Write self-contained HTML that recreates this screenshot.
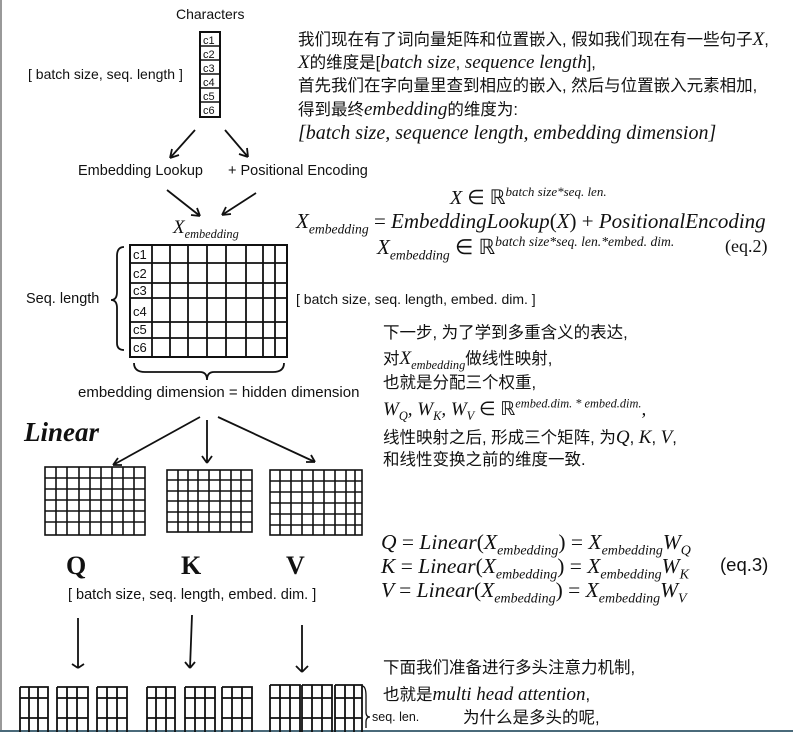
<!DOCTYPE html>
<html><head><meta charset="utf-8"><style>
body{margin:0;width:793px;height:732px;background:#fff;position:relative;overflow:hidden;font-family:"Liberation Sans","Noto Sans CJK SC",sans-serif;color:#111}
.t{position:absolute;white-space:nowrap;line-height:1}
.s{font-size:14.5px}
.c{font-size:16.5px;font-family:"Liberation Sans","Noto Sans CJK SC",sans-serif}
.m{font-family:"Liberation Serif",serif;font-style:italic}
.u{font-family:"Liberation Serif",serif;font-style:normal}
sub,sup{font-size:65%;line-height:0}
sub{vertical-align:-0.4em}
sup{vertical-align:0.6em}
svg{position:absolute;left:0;top:0}
</style></head><body>
<svg width="793" height="732" viewBox="0 0 793 732" fill="none" stroke="#111" stroke-width="2">
<line x1="1" y1="0" x2="1" y2="732" stroke="#999" stroke-width="2"/>
<line x1="0" y1="731" x2="793" y2="731" stroke="#4a6a7a" stroke-width="2"/>
<rect x="200" y="32" width="20" height="85"/>
<g stroke-width="1.5"><line x1="200" y1="46" x2="220" y2="46"/><line x1="200" y1="60" x2="220" y2="60"/><line x1="200" y1="74" x2="220" y2="74"/><line x1="200" y1="88" x2="220" y2="88"/><line x1="200" y1="102" x2="220" y2="102"/></g>
<g fill="#111" stroke="none" font-family="Liberation Sans" font-size="11"><text x="203" y="44">c1</text><text x="203" y="58">c2</text><text x="203" y="72">c3</text><text x="203" y="86">c4</text><text x="203" y="100">c5</text><text x="203" y="114">c6</text></g>
<g stroke-width="1.8">
<path d="M195 130 L170 158 M170 158 l2 -9 M170 158 l9 -3"/>
<path d="M225 130 L248 157 M248 157 l-9 -3 M248 157 l-1 -9"/>
<path d="M167 190 L200 216 M200 216 l-9 -1 M200 216 l-3 -8"/>
<path d="M256 193 L222 215 M222 215 l4 -8 M222 215 l9 -1"/>
<path d="M200 417 L113 465 M113 465 l5 -7 M113 465 l9 0"/>
<path d="M207 420 L207 463 M207 463 l-5 -7 M207 463 l5 -7"/>
<path d="M218 417 L315 462 M315 462 l-9 0 M315 462 l-4 -7"/>
<path d="M78 618 L78 668 M78 668 l-6 -4 M78 668 l6 -4"/>
<path d="M192 615 L190 668 M190 668 l-5 -6 M190 668 l5 -6"/>
<path d="M302 625 L302 672 M302 672 l-6 -6 M302 672 l6 -6"/>
</g>
<rect x="130" y="245" width="157" height="112"/>
<g stroke-width="1.8">
<line x1="152" y1="245" x2="152" y2="357"/><line x1="170" y1="245" x2="170" y2="357"/><line x1="188" y1="245" x2="188" y2="357"/><line x1="207" y1="245" x2="207" y2="357"/><line x1="226" y1="245" x2="226" y2="357"/><line x1="246" y1="245" x2="246" y2="357"/><line x1="263" y1="245" x2="263" y2="357"/><line x1="275" y1="245" x2="275" y2="357"/>
<line x1="130" y1="263" x2="287" y2="263"/><line x1="130" y1="283" x2="287" y2="283"/><line x1="130" y1="298" x2="287" y2="298"/><line x1="130" y1="322" x2="287" y2="322"/><line x1="130" y1="338" x2="287" y2="338"/>
</g>
<g fill="#111" stroke="none" font-family="Liberation Sans" font-size="13"><text x="133" y="259">c1</text><text x="133" y="278">c2</text><text x="133" y="295">c3</text><text x="133" y="316">c4</text><text x="133" y="334">c5</text><text x="133" y="352">c6</text></g>
<path d="M124 247 Q117 247 117 256 L117 292 Q117 300 111 300 Q117 300 117 308 L117 343 Q117 350 124 350" stroke-width="1.8"/>
<path d="M134 363 Q134 372 145 372 L200 372 Q207 372 207 380 Q207 372 214 372 L273 372 Q284 372 284 363" stroke-width="1.8"/>
<g stroke-width="1.6">
<rect x="45" y="467" width="100" height="68"/>
<path d="M56 467V535M67 467V535M79 467V535M90 467V535M101 467V535M112 467V535M123 467V535M134 467V535M45 478H145M45 489H145M45 500H145M45 511H145M45 522H145"/>
<rect x="167" y="470" width="85" height="62"/>
<path d="M178 470V532M188 470V532M198 470V532M209 470V532M220 470V532M231 470V532M241 470V532M167 480H252M167 491H252M167 501H252M167 512H252M167 522H252"/>
<rect x="270" y="470" width="92" height="65"/>
<path d="M280 470V535M291 470V535M302 470V535M313 470V535M324 470V535M335 470V535M346 470V535M355 470V535M270 481H362M270 492H362M270 503H362M270 514H362M270 525H362"/>
</g>
<g stroke-width="1.8">
<path d="M20 687H48V732M20 687V732M20 698H48M20 718H48M29 687V732M38 687V732"/>
<path d="M57 687H88V732M57 687V732M57 698H88M57 718H88M67 687V732M77 687V732"/>
<path d="M97 687H127V732M97 687V732M97 698H127M97 718H127M107 687V732M117 687V732"/>
<path d="M147 687H175V732M147 687V732M147 698H175M147 718H175M156 687V732M166 687V732"/>
<path d="M185 687H215V732M185 687V732M185 698H215M185 718H215M195 687V732M205 687V732"/>
<path d="M222 687H252V732M222 687V732M222 698H252M222 718H252M232 687V732M242 687V732"/>
<path d="M270 685H300V732M270 685V732M270 698H300M270 718H300M280 685V732M290 685V732"/>
<path d="M302 685H332V732M302 685V732M302 698H332M302 718H332M312 685V732M322 685V732"/>
<path d="M335 685H362V732M335 685V732M335 698H362M335 718H362M345 685V732M354 685V732"/>
<path d="M362 686 Q366 686 366 696 L366 712 Q366 717 370 717 Q366 717 366 722 L366 728" stroke-width="1.3"/>
</g>
<g fill="#111" stroke="none" font-family="Liberation Serif" font-weight="bold" font-size="26"><text x="66" y="574">Q</text><text x="181" y="574">K</text><text x="286" y="574">V</text></g>
<text x="24" y="441" fill="#111" stroke="none" font-family="Liberation Serif" font-style="italic" font-weight="bold" font-size="27">Linear</text>
</svg>
<div class="t s" style="left:176px;top:7px;font-size:14px">Characters</div>
<div class="t s" style="left:28px;top:67px;font-size:14px">[ batch size, seq. length ]</div>
<div class="t s" style="left:78px;top:164px">Embedding Lookup</div>
<div class="t s" style="left:228px;top:164px">+ Positional Encoding</div>
<div class="t m" style="left:173px;top:218px;font-size:19px">X<sub>embedding</sub></div>
<div class="t s" style="left:26px;top:292px">Seq. length</div>
<div class="t s" style="left:296px;top:292px;font-size:14px">[ batch size, seq. length, embed. dim. ]</div>
<div class="t s" style="left:78px;top:385px;font-size:15px">embedding dimension = hidden dimension</div>
<div class="t s" style="left:68px;top:588px;font-size:14.5px">[ batch size, seq. length, embed. dim. ]</div>
<div class="t s" style="left:372px;top:711px;font-size:12.5px">seq. len.</div>

<div class="t c" style="left:298px;top:30px">我们现在有了词向量矩阵和位置嵌入, 假如我们现在有一些句子<span class="m" style="font-size:19px">X</span>,</div>
<div class="t c" style="left:298px;top:53px"><span class="m" style="font-size:19px">X</span>的维度是[<span class="m" style="font-size:19px">batch size</span>, <span class="m" style="font-size:19px">sequence length</span>],</div>
<div class="t c" style="left:298px;top:78px">首先我们在字向量里查到相应的嵌入, 然后与位置嵌入元素相加,</div>
<div class="t c" style="left:298px;top:100px">得到最终<span class="m" style="font-size:19px">embedding</span>的维度为:</div>
<div class="t m" style="left:298px;top:123px;font-size:20px">[batch size, sequence length, embedding dimension]</div>

<div class="t m" style="left:450px;top:188px;font-size:20px">X <span class="u">∈ ℝ</span><sup>batch size*seq. len.</sup></div>
<div class="t m" style="left:296px;top:211px;font-size:21px">X<sub>embedding</sub> <span class="u">=</span> EmbeddingLookup<span class="u">(</span>X<span class="u">) +</span> PositionalEncoding</div>
<div class="t m" style="left:377px;top:237px;font-size:21px">X<sub>embedding</sub> <span class="u">∈ ℝ</span><sup>batch size*seq. len.*embed. dim.</sup></div>
<div class="t u" style="left:725px;top:237px;font-size:18px">(eq.2)</div>

<div class="t c" style="left:383px;top:325px">下一步, 为了学到多重含义的表达,</div>
<div class="t c" style="left:383px;top:349px">对<span class="m" style="font-size:19px">X<sub>embedding</sub></span>做线性映射,</div>
<div class="t c" style="left:383px;top:375px">也就是分配三个权重,</div>
<div class="t m" style="left:383px;top:400px;font-size:19px">W<sub>Q</sub>, W<sub>K</sub>, W<sub>V</sub> <span class="u">∈ ℝ</span><sup>embed.dim. * embed.dim.</sup>,</div>
<div class="t c" style="left:383px;top:428px">线性映射之后, 形成三个矩阵, 为<span class="m" style="font-size:19px">Q</span>, <span class="m" style="font-size:19px">K</span>, <span class="m" style="font-size:19px">V</span>,</div>
<div class="t c" style="left:383px;top:452px">和线性变换之前的维度一致.</div>

<div class="t m" style="left:381px;top:532px;font-size:21.5px">Q <span class="u">=</span> Linear<span class="u">(</span>X<sub>embedding</sub><span class="u">) =</span> X<sub>embedding</sub>W<sub>Q</sub></div>
<div class="t m" style="left:381px;top:556px;font-size:21.5px">K <span class="u">=</span> Linear<span class="u">(</span>X<sub>embedding</sub><span class="u">) =</span> X<sub>embedding</sub>W<sub>K</sub></div>
<div class="t m" style="left:381px;top:580px;font-size:21.5px">V <span class="u">=</span> Linear<span class="u">(</span>X<sub>embedding</sub><span class="u">) =</span> X<sub>embedding</sub>W<sub>V</sub></div>
<div class="t" style="left:720px;top:556px;font-size:18.5px">(eq.3)</div>

<div class="t c" style="left:383px;top:660px">下面我们准备进行多头注意力机制,</div>
<div class="t c" style="left:383px;top:685px">也就是<span class="m" style="font-size:19px">multi head attention</span>,</div>
<div class="t c" style="left:463px;top:710px">为什么是多头的呢,</div>
</body></html>
